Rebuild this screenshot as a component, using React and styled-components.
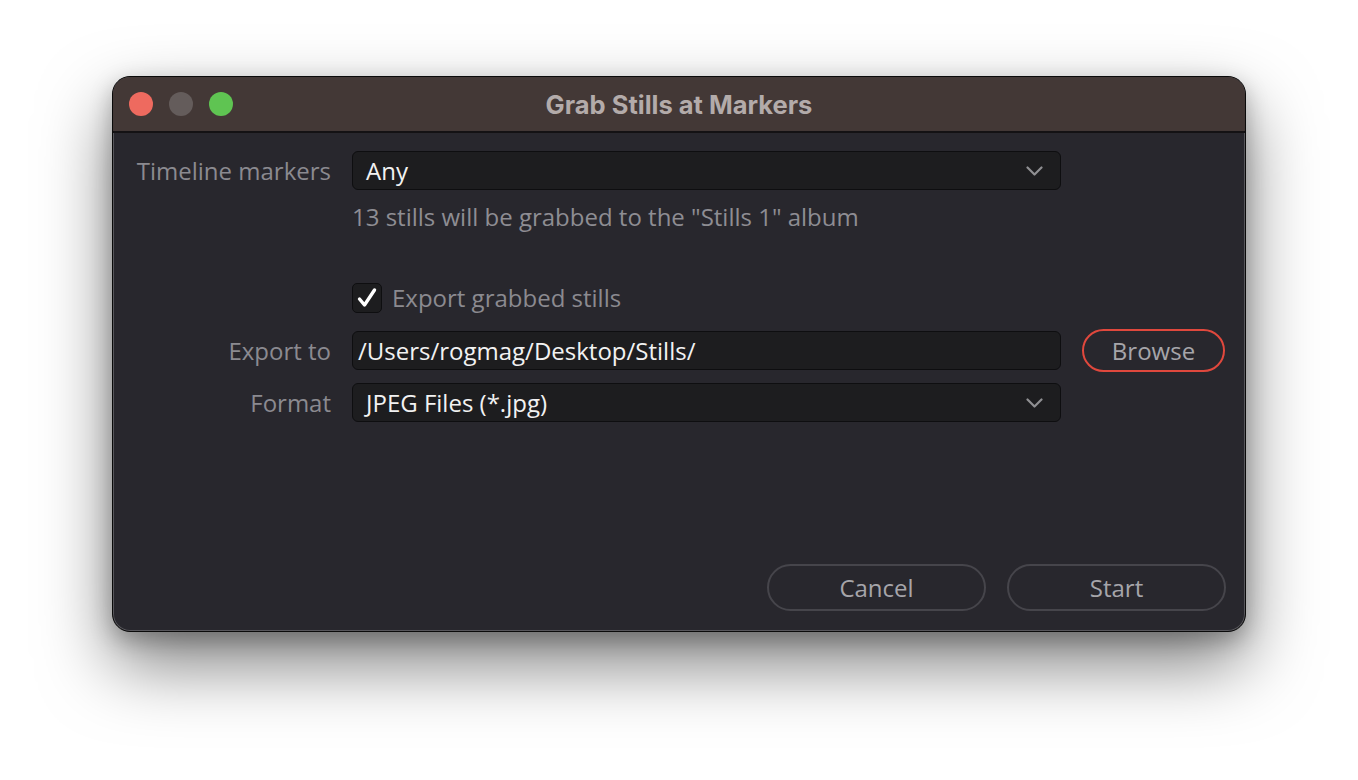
import React from 'react';
import styled, { createGlobalStyle } from 'styled-components';

const GlobalStyle = createGlobalStyle`
  html, body {
    margin: 0;
    padding: 0;
    background: #ffffff;
  }
  body {
    font-family: 'Open Sans', 'Noto Sans', sans-serif;
  }
`;

const Page = styled.div`
  width: 1358px;
  height: 780px;
  display: flex;
  justify-content: center;
  padding-top: 76px;
  box-sizing: border-box;
`;

const Window = styled.div`
  width: 1134px;
  height: 556px;
  display: flex;
  flex-direction: column;
  border-radius: 18px;
  overflow: hidden;
  background: #28272d;
  border: 1px solid #0a0a0a;
  box-sizing: border-box;
  box-shadow: inset 0 0 0 1px #57565b, 0 32px 70px rgba(0, 0, 0, 0.5),
    0 8px 22px rgba(0, 0, 0, 0.25);
`;

const TitleBar = styled.div`
  height: 56px;
  flex-shrink: 0;
  display: flex;
  align-items: center;
  position: relative;
  background: #433836;
  border-bottom: 2px solid #141214;
  box-sizing: border-box;
`;

const Lights = styled.div`
  display: flex;
  gap: 16px;
  padding-left: 16px;
`;

const Light = styled.span`
  width: 24px;
  height: 24px;
  border-radius: 50%;
  background: ${({ color }) => color};
`;

const Title = styled.div`
  position: absolute;
  left: 0;
  right: 0;
  text-align: center;
  font-family: Inter, 'Liberation Sans', sans-serif;
  font-weight: 700;
  font-size: 25.5px;
  color: #b3abaa;
  pointer-events: none;
`;

const Body = styled.div`
  flex: 1;
  display: flex;
  flex-direction: column;
  padding: 18px 19px 20px 19px;
`;

const Row = styled.div`
  display: grid;
  grid-template-columns: 199px 709px 143px;
  column-gap: 21px;
  align-items: center;
  height: ${({ h }) => h}px;
  margin-top: ${({ mt }) => mt || 0}px;
`;

const Label = styled.div`
  text-align: right;
  font-size: 24px;
  color: #8b8a90;
  white-space: nowrap;
`;

const Field = styled.div`
  height: 39px;
  display: flex;
  align-items: center;
  justify-content: space-between;
  padding: 0 17px 0 ${({ pad }) => pad || 13}px;
  background: #1d1d1f;
  border: 1px solid #0e0e10;
  border-radius: 6px;
  box-sizing: border-box;
  font-size: 24px;
  color: #f2f2f2;
  white-space: nowrap;
`;

const Info = styled.div`
  grid-column: 2 / 4;
  font-size: 24px;
  color: #8e8d93;
  line-height: 28px;
`;

const CheckWrap = styled.label`
  grid-column: 2 / 4;
  display: flex;
  align-items: center;
  gap: 10px;
  font-size: 24px;
  color: #8b8a90;
`;

const Box = styled.span`
  width: 30px;
  height: 30px;
  display: flex;
  align-items: center;
  justify-content: center;
  background: #1d1d1f;
  border: 1px solid #0e0e10;
  border-radius: 5px;
  box-sizing: border-box;
`;

const PillButton = styled.button`
  height: ${({ h }) => h || 47}px;
  width: ${({ w }) => w}px;
  border-radius: 999px;
  background: transparent;
  border: ${({ accent }) => (accent ? '2px solid #e0483d' : '2px solid #46454b')};
  color: #a6a5aa;
  font-family: 'Open Sans', 'Noto Sans', sans-serif;
  font-size: 24px;
  padding: 0;
  box-sizing: border-box;
  cursor: pointer;
`;

const Footer = styled.div`
  margin-top: auto;
  display: flex;
  justify-content: flex-end;
  gap: 21px;
`;

const Chevron = () => (
  <svg width="17" height="10" viewBox="0 0 17 10" fill="none">
    <path d="M1.5 1.5 L8.5 8.5 L15.5 1.5" stroke="#8f8f92" strokeWidth="2.2" strokeLinecap="round" strokeLinejoin="round" />
  </svg>
);

const Check = () => (
  <svg width="22" height="22" viewBox="0 0 22 22" fill="none">
    <path d="M3.5 12 L8.5 18 L18.5 3" stroke="#ffffff" strokeWidth="3.4" strokeLinecap="round" strokeLinejoin="round" />
  </svg>
);

export default function App() {
  return (
    <>
      <GlobalStyle />
      <Page>
        <Window>
          <TitleBar>
            <Lights>
              <Light color="#ee6a5f" />
              <Light color="#645c5b" />
              <Light color="#5fc452" />
            </Lights>
            <Title>Grab Stills at Markers</Title>
          </TitleBar>
          <Body>
            <Row h={39}>
              <Label>Timeline markers</Label>
              <Field>
                <span>Any</span>
                <Chevron />
              </Field>
            </Row>
            <Row h={28} mt={13}>
              <span />
              <Info>13 stills will be grabbed to the "Stills 1" album</Info>
            </Row>
            <Row h={30} mt={50}>
              <span />
              <CheckWrap>
                <Box>
                  <Check />
                </Box>
                Export grabbed stills
              </CheckWrap>
            </Row>
            <Row h={43} mt={18}>
              <Label>Export to</Label>
              <Field pad={5}>
                <span>/Users/rogmag/Desktop/Stills/</span>
              </Field>
              <PillButton accent h={43} w={143}>
                Browse
              </PillButton>
            </Row>
            <Row h={39} mt={11}>
              <Label>Format</Label>
              <Field>
                <span>JPEG Files (*.jpg)</span>
                <Chevron />
              </Field>
            </Row>
            <Footer>
              <PillButton w={219}>Cancel</PillButton>
              <PillButton w={219}>Start</PillButton>
            </Footer>
          </Body>
        </Window>
      </Page>
    </>
  );
}
